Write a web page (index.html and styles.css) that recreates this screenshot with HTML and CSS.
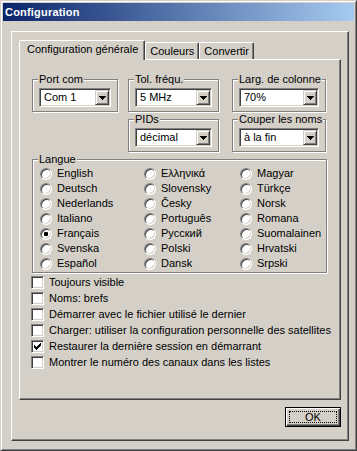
FILE: index.html
```html
<!DOCTYPE html>
<html lang="fr">
<head>
  <meta charset="UTF-8" />
  <meta name="viewport" content="width=device-width, initial-scale=1.0" />
  <title>Configuration</title>
  <link rel="stylesheet" href="styles.css">
</head>
<body>
  <div class="window">
    <div class="titlebar">Configuration</div>
    <div class="frame">
      <div class="tabs">
        <div class="tab active">Configuration générale</div>
        <div class="tab">Couleurs</div>
        <div class="tab">Convertir</div>
      </div>
      <div class="page">
        <div class="settings">
          <fieldset class="group g-port">
            <legend>Port com</legend>
            <div class="combo"><span class="value">Com 1</span><span class="drop"><svg width="7" height="4" viewBox="0 0 7 4"><path d="M0 0h7v1H0zM1 1h5v1H1zM2 2h3v1H2zM3 3h1v1H3z"/></svg></span></div>
          </fieldset>
          <fieldset class="group g-tol">
            <legend>Tol. fréqu.</legend>
            <div class="combo"><span class="value">5 MHz</span><span class="drop"><svg width="7" height="4" viewBox="0 0 7 4"><path d="M0 0h7v1H0zM1 1h5v1H1zM2 2h3v1H2zM3 3h1v1H3z"/></svg></span></div>
          </fieldset>
          <fieldset class="group g-larg">
            <legend>Larg. de colonne</legend>
            <div class="combo"><span class="value">70%</span><span class="drop"><svg width="7" height="4" viewBox="0 0 7 4"><path d="M0 0h7v1H0zM1 1h5v1H1zM2 2h3v1H2zM3 3h1v1H3z"/></svg></span></div>
          </fieldset>
          <fieldset class="group g-pids">
            <legend>PIDs</legend>
            <div class="combo"><span class="value">décimal</span><span class="drop"><svg width="7" height="4" viewBox="0 0 7 4"><path d="M0 0h7v1H0zM1 1h5v1H1zM2 2h3v1H2zM3 3h1v1H3z"/></svg></span></div>
          </fieldset>
          <fieldset class="group g-cut">
            <legend>Couper les noms</legend>
            <div class="combo"><span class="value">à la fin</span><span class="drop"><svg width="7" height="4" viewBox="0 0 7 4"><path d="M0 0h7v1H0zM1 1h5v1H1zM2 2h3v1H2zM3 3h1v1H3z"/></svg></span></div>
          </fieldset>
        </div>

        <fieldset class="group lang">
          <legend>Langue</legend>
          <div class="radios">
            <label class="radio"><span class="dot"></span>English</label>
            <label class="radio"><span class="dot"></span>Deutsch</label>
            <label class="radio"><span class="dot"></span>Nederlands</label>
            <label class="radio"><span class="dot"></span>Italiano</label>
            <label class="radio"><span class="dot checked"></span>Français</label>
            <label class="radio"><span class="dot"></span>Svenska</label>
            <label class="radio"><span class="dot"></span>Español</label>
            <label class="radio"><span class="dot"></span>Ελληνικά</label>
            <label class="radio"><span class="dot"></span>Slovensky</label>
            <label class="radio"><span class="dot"></span>Česky</label>
            <label class="radio"><span class="dot"></span>Português</label>
            <label class="radio"><span class="dot"></span>Русский</label>
            <label class="radio"><span class="dot"></span>Polski</label>
            <label class="radio"><span class="dot"></span>Dansk</label>
            <label class="radio"><span class="dot"></span>Magyar</label>
            <label class="radio"><span class="dot"></span>Türkçe</label>
            <label class="radio"><span class="dot"></span>Norsk</label>
            <label class="radio"><span class="dot"></span>Romana</label>
            <label class="radio"><span class="dot"></span>Suomalainen</label>
            <label class="radio"><span class="dot"></span>Hrvatski</label>
            <label class="radio"><span class="dot"></span>Srpski</label>
          </div>
        </fieldset>

        <div class="checks">
          <label class="check"><span class="box"></span>Toujours visible</label>
          <label class="check"><span class="box"></span>Noms: brefs</label>
          <label class="check"><span class="box"></span>Démarrer avec le fichier utilisé le dernier</label>
          <label class="check"><span class="box"></span>Charger: utiliser la configuration personnelle des satellites</label>
          <label class="check"><span class="box"><svg width="7" height="7" viewBox="0 0 7 7"><path d="M6 0h1v1H6zM5 1h2v1H5zM0 2h1v1H0zM4 2h3v1H4zM0 3h2v1H0zM3 3h3v1H3zM0 4h5v1H0zM1 5h3v1H1zM2 6h1v1H2z"/></svg></span>Restaurer la dernière session en démarrant</label>
          <label class="check"><span class="box"></span>Montrer le numéro des canaux dans les listes</label>
        </div>
      </div>
      <div class="buttons">
        <button class="btn default"><span class="focus">OK</span></button>
      </div>
    </div>
  </div>
</body>
</html>
```

FILE: styles.css
```css
* {
  box-sizing: border-box;
}
body {
  margin: 0;
  background: #d4d0c8;
  font-family: "Liberation Sans", Arial, sans-serif;
  font-size: 11px;
  line-height: 13px;
  color: #000;
}
.window {
  width: 357px;
  height: 451px;
  display: flex;
  flex-direction: column;
  padding: 2px;
  background: #d4d0c8;
  border: 1px solid;
  border-color: #d4d0c8 #404040 #404040 #d4d0c8;
  box-shadow: inset 1px 1px #fff, inset -1px -1px #808080;
}
.titlebar {
  height: 18px;
  line-height: 18px;
  padding-left: 2px;
  color: #fff;
  font-weight: bold;
  letter-spacing: 0.2px;
  background: linear-gradient(to right, #0a246a, #a6caf0);
}
.frame {
  flex: 1;
  display: flex;
  flex-direction: column;
  margin: 10px 5px 7px 8px;
  padding: 8px 7px 13px 7px;
  border: 1px solid;
  border-color: #fff #404040 #404040 #fff;
  box-shadow: inset -1px -1px #808080;
}

/* tabs */
.tabs {
  display: flex;
  align-items: flex-end;
  height: 19px;
}
.tab {
  height: 17px;
  padding: 2px 4px 0;
  border: 1px solid;
  border-bottom: none;
  border-color: #fff #404040 transparent #fff;
  border-radius: 2px 2px 0 0;
  box-shadow: inset -1px 0 #808080;
  white-space: nowrap;
}
.tab.active {
  position: relative;
  z-index: 1;
  height: 20px;
  margin-bottom: -1px;
  padding: 2px 6px 0 7px;
  background: #d4d0c8;
}
.page {
  flex: 1;
  padding: 13px 0 0 12px;
  border: 1px solid;
  border-color: #fff #404040 #404040 #fff;
  box-shadow: inset -1px -1px #808080;
}

/* group boxes */
.group {
  margin: 0;
  min-width: 0;
  padding: 2px 6px 4px;
  border: 1px solid #808080;
  box-shadow: inset 1px 1px #fff, 1px 1px #fff;
}
.group legend {
  margin-left: -1px;
  padding: 0 1px;
  white-space: nowrap;
  background: #d4d0c8;
}
.settings {
  display: grid;
  grid-template-columns: 96px 104px 94px;
  grid-template-rows: 39px 39px;
  row-gap: 1px;
}
.g-port { grid-column: 1; grid-row: 1; width: 86px; }
.g-tol  { grid-column: 2; grid-row: 1; width: 91px; }
.g-larg { grid-column: 3; grid-row: 1; width: 94px; }
.g-pids { grid-column: 2; grid-row: 2; width: 91px; }
.g-cut  { grid-column: 3; grid-row: 2; width: 94px; }

.combo {
  display: flex;
  height: 19px;
  padding: 1px;
  background: #fff;
  border: 1px solid;
  border-color: #808080 #fff #fff #808080;
  box-shadow: inset 1px 1px #404040, inset -1px -1px #d4d0c8;
}
.combo .value {
  flex: 1;
  padding-left: 3px;
  line-height: 15px;
  white-space: nowrap;
}
.drop {
  width: 14px;
  display: flex;
  align-items: center;
  justify-content: center;
  background: #d4d0c8;
  border: 1px solid;
  border-color: #d4d0c8 #404040 #404040 #d4d0c8;
  box-shadow: inset 1px 1px #fff, inset -1px -1px #808080;
}
.drop svg {
  display: block;
}

/* langue */
.lang {
  width: 295px;
  margin-top: 1px;
  padding: 0 6px 1px;
}
.radios {
  display: grid;
  grid-template-columns: 104px 96px 1fr;
  grid-template-rows: repeat(7, 15px);
  grid-auto-flow: column;
  margin-left: 1px;
}
.radio {
  display: flex;
  align-items: center;
  gap: 5px;
  white-space: nowrap;
}
.dot {
  position: relative;
  width: 12px;
  height: 12px;
  flex: none;
  border-radius: 50%;
  background: #fff;
  border: 1px solid;
  border-color: #808080 #fff #fff #808080;
  box-shadow: inset 1px 1px #404040, inset -1px -1px #d4d0c8;
}
.dot.checked::after {
  content: "";
  position: absolute;
  left: 3px;
  top: 3px;
  width: 4px;
  height: 4px;
  border-radius: 1px;
  background: #000;
}

/* checkboxes */
.checks {
  margin: 1px 0 0 -1px;
}
.check {
  display: flex;
  align-items: center;
  gap: 5px;
  height: 16px;
  white-space: nowrap;
}
.box {
  width: 13px;
  height: 13px;
  flex: none;
  display: flex;
  align-items: center;
  justify-content: center;
  background: #fff;
  border: 1px solid;
  border-color: #808080 #fff #fff #808080;
  box-shadow: inset 1px 1px #404040, inset -1px -1px #d4d0c8;
}
.box svg {
  display: block;
}

/* buttons */
.buttons {
  display: flex;
  justify-content: flex-end;
  margin-top: 7px;
}
.btn {
  width: 56px;
  height: 20px;
  padding: 3px;
  font: inherit;
  color: #000;
  background: #d4d0c8;
  border: 1px solid #000;
  box-shadow: inset 1px 1px #fff, inset -1px -1px #404040, inset -2px -2px #808080;
}
.btn .focus {
  display: block;
  height: 100%;
  line-height: 11px;
  text-align: center;
  border: 1px dotted #000;
}
```
